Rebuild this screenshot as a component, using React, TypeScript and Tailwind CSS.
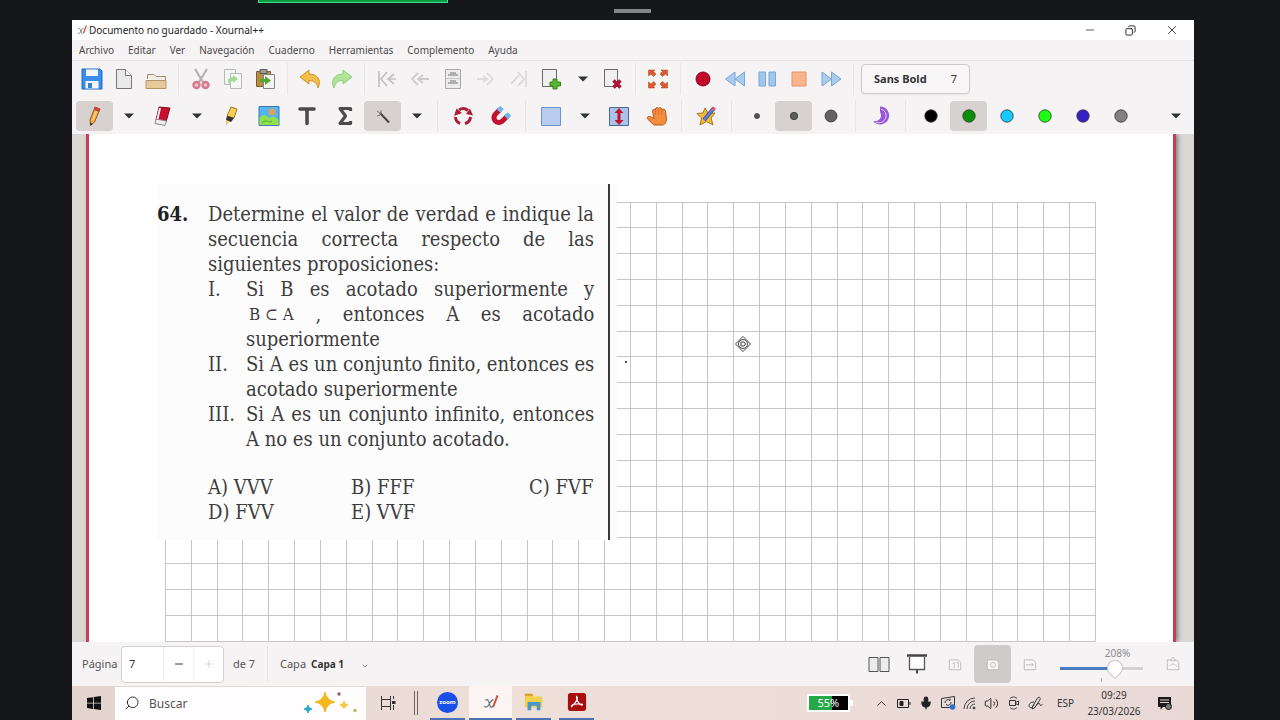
import type { ReactNode } from "react";
import { ChevronUp, ChevronDown, Copy, Minus, Mic, Plus, Search, Volume2, X } from "lucide-react";

const STEP = 25.83;

const menus = [
  "Archivo",
  "Editar",
  "Ver",
  "Navegación",
  "Cuaderno",
  "Herramientas",
  "Complemento",
  "Ayuda",
];

const colors = [
  { name: "Negro", fill: "#000000" },
  { name: "Verde", fill: "#0a8f0a", active: true },
  { name: "Celeste", fill: "#18c8fa" },
  { name: "Lima", fill: "#1cff14" },
  { name: "Azul", fill: "#3622c4" },
  { name: "Gris", fill: "#808080" },
];

const options = ["A) VVV", "B) FFF", "C) FVF", "D) FVV", "E) VVF"];

const Icon = ({ children, size = 22 }: { children: ReactNode; size?: number }) => (
  <svg width={size} height={size} viewBox="0 0 22 22" fill="none" className="shrink-0">
    {children}
  </svg>
);

const Tool = ({ label, children }: { label: string; children: ReactNode }) => (
  <button aria-label={label} className="flex h-[30px] w-8 items-center justify-center rounded">
    {children}
  </button>
);

const Mode = ({ label, active, children }: { label: string; active?: boolean; children: ReactNode }) => (
  <button
    aria-label={label}
    className={`flex h-[30px] w-[37px] shrink-0 items-center justify-center rounded ${active ? "bg-[#d7d2d0]" : ""}`}
  >
    {children}
  </button>
);

const Caret = ({ label }: { label: string }) => (
  <button aria-label={label} className="flex h-[30px] w-[29px] shrink-0 items-center justify-center">
    <svg width="10" height="6" viewBox="0 0 10 6">
      <path d="M0 0.5H10L5 5.5Z" fill="#2e3436" />
    </svg>
  </button>
);

const Sep = () => (
  <div className="flex h-8 w-[13px] shrink-0 justify-center">
    <div className="w-px bg-[#e9e5e5]" />
  </div>
);

const SepSmall = () => (
  <div className="flex h-8 w-[11px] shrink-0 justify-center">
    <div className="w-px bg-[#e9e5e5]" />
  </div>
);

const Dot = ({ r, fill }: { r: number; fill: string }) => (
  <Icon>
    <circle cx="11" cy="11" r={r} fill={fill} stroke="#333" strokeWidth="0.8" />
  </Icon>
);

const XLogo = ({ size }: { size: number }) => (
  <Icon size={size}>
    <path d="M4 9c3-2 4 0 5 4s2 6 4 3M14 8c-3 0-4 4-6 7s-4 3-5 1" stroke="#667078" strokeWidth="1.5" />
    <path d="M19 3l-5 13" stroke="#d0503c" strokeWidth="2.4" />
    <path d="M14.6 14.5l-1 3" stroke="#8a6a50" strokeWidth="1.4" />
  </Icon>
);

const TitleBar = () => (
  <div className="flex h-5 items-center bg-white pl-1">
    <XLogo size={12} />
    <h1 className="ml-px flex-1 text-[10px] text-[#222]">Documento no guardado - Xournal++</h1>
    <div className="flex items-center text-[#222]">
      <button aria-label="Minimizar" className="flex w-10 justify-center">
        <Minus size={12} strokeWidth={1.5} />
      </button>
      <button aria-label="Restaurar" className="flex w-10 justify-center">
        <Copy size={11} strokeWidth={2} className="-scale-x-100" />
      </button>
      <button aria-label="Cerrar" className="flex w-11 justify-center">
        <X size={14} strokeWidth={1.5} />
      </button>
    </div>
  </div>
);

const MenuBar = () => (
  <nav className="flex h-[21px] items-center gap-[14px] border-b border-[#e6e2e2] pl-[7px]">
    {menus.map((menu) => (
      <button key={menu} className="text-[10px] text-[#4a4a4a]">
        {menu}
      </button>
    ))}
  </nav>
);

const MainTools = () => (
  <div className="flex h-9 items-center pl-1">
    <Tool label="Guardar">
      <Icon>
        <path d="M1 1H19L21 3V21H1Z" fill="#3b8eea" stroke="#2268c0" />
        <path d="M5 1.5H17V8H5Z" fill="#f4f8fc" />
        <path d="M4.5 13H17.5V20.5H4.5Z" fill="#f4f8fc" />
        <path d="M7 15H11V20H7Z" fill="#3b7fc8" />
      </Icon>
    </Tool>
    <Tool label="Nuevo">
      <Icon>
        <path d="M3.5 1.5H12.5L18.5 7.5V20.5H3.5Z" fill="#e9e9e9" stroke="#777" />
        <path d="M12.5 1.5V7.5H18.5" fill="#fff" stroke="#777" />
      </Icon>
    </Tool>
    <Tool label="Abrir">
      <Icon>
        <path d="M2.5 11V6.5H9L11 8.5H20.5V12" fill="#f1eee8" stroke="#a08d70" />
        <path d="M1 12.5H21V20.5H1Z" fill="#e7c99a" stroke="#b2956b" />
      </Icon>
    </Tool>
    <Sep />
    <Tool label="Cortar">
      <Icon>
        <path d="M5 1L13 14M17 1L9 14" stroke="#b3b3b3" strokeWidth="2.2" />
        <circle cx="6.5" cy="17" r="3" fill="#f0c4cc" stroke="#d47a8c" strokeWidth="2.4" />
        <circle cx="15.5" cy="17" r="3" fill="#f0c4cc" stroke="#d47a8c" strokeWidth="2.4" />
      </Icon>
    </Tool>
    <Tool label="Copiar">
      <Icon>
        <path d="M2.5 1.5H13.5V16.5H2.5Z" fill="#f2f4f1" stroke="#b7bab5" />
        <path d="M8.5 5.5H19.500V20.500H8.500Z" fill="#f4f7f3" stroke="#b7bab5" />
        <path d="M6 10C6 7 9 6 11 6V4L16 8L11 12V10C9 10 8 11 9 13C7 13 6 12 6 10Z" fill="#a4d895" transform="translate(0 3)" />
      </Icon>
    </Tool>
    <Tool label="Pegar">
      <Icon>
        <path d="M2.5 3.5H16.5V18.5H2.5Z" fill="#b98b45" stroke="#7d5c28" />
        <path d="M6 1.5H13V5.5H6Z" fill="#999" stroke="#5c5c5c" />
        <path d="M9.5 6.5H20.5V20.5H9.5Z" fill="#f4f6f3" stroke="#85877f" />
        <path d="M6 11H11V8L17 12.5L11 17V14H6Z" fill="#4ea832" />
      </Icon>
    </Tool>
    <Sep />
    <Tool label="Deshacer">
      <Icon>
        <path d="M1 9L10 2V6C18 6 23 12 19 20C18 15 15 12.5 10 12.5V16Z" fill="#f7bd4b" stroke="#cf922c" />
      </Icon>
    </Tool>
    <Tool label="Rehacer">
      <Icon>
        <path d="M21 9L12 2V6C4 6 -1 12 3 20C4 15 7 12.5 12 12.5V16Z" fill="#afe39a" stroke="#92cf7c" />
      </Icon>
    </Tool>
    <Sep />
    <div className="flex gap-px">
      <Tool label="Primera página">
        <Icon>
          <path d="M3 3V19M11 4L5 11L11 18M18 6L12 11L18 16M12 11H20" stroke="#c3c1c1" strokeWidth="1.7" />
        </Icon>
      </Tool>
      <Tool label="Página anterior">
        <Icon>
          <path d="M9 5L3 11L9 17M14 7L9 11L14 15M9 11H20" stroke="#cdcbcb" strokeWidth="1.8" />
        </Icon>
      </Tool>
      <Tool label="Ir a página">
        <Icon>
          <path d="M3.5 1.5H18.5V20.5H3.5Z" fill="#ececec" stroke="#a9a9a9" />
          <path d="M6 7H16M6 15H16M8 5H14M8 13H14" stroke="#9b9b9b" strokeWidth="1.6" />
          <path d="M4 10.5H18" stroke="#c5c5c5" />
        </Icon>
      </Tool>
      <Tool label="Página siguiente">
        <Icon>
          <path d="M12 5L18 11L12 17M2 11H12M8 8L12 11L8 14" stroke="#dddbdb" strokeWidth="1.8" />
        </Icon>
      </Tool>
      <Tool label="Última página">
        <Icon>
          <path d="M18 3V19M10 4L16 11L10 18M3 16L11 7" stroke="#d9d7d7" strokeWidth="1.7" />
        </Icon>
      </Tool>
      <Tool label="Añadir página">
        <Icon>
          <path d="M1.5 1.5H15.5V18.5H1.5Z" fill="#f0f0f0" stroke="#6b6b6b" />
          <path d="M12 11H16V14H19.5V18H16V21H12V18H9V14H12Z" fill="#58b830" stroke="#34801a" />
        </Icon>
      </Tool>
    </div>
    <Caret label="Tipo de página" />
    <Tool label="Eliminar página">
      <Icon>
        <path d="M2.5 1.5H15.5V18.5H2.5Z" fill="#f0f0f0" stroke="#6b6b6b" />
        <path d="M11.5 12.5L18.5 19.5M18.5 12.5L11.5 19.5" stroke="#a81834" strokeWidth="3.6" />
      </Icon>
    </Tool>
    <Sep />
    <Tool label="Pantalla completa">
      <Icon>
        <path d="M1.500 2H8L6.500 3.500L9 6L6.500 8.500L4 6L1.500 8ZM20.500 2V8L18.500 6L15.500 8.500L13 6L15.500 3.500L14 2ZM1.500 20V14L4 16L6.500 13.500L9 16L6.500 18.500L8 20ZM20.500 20H14L15.500 18.500L13 16L15.500 13.500L18.500 16L20.500 14Z" fill="#dd5a2c" stroke="#b43c18" strokeWidth="0.5" />
      </Icon>
    </Tool>
    <Sep />
    <Tool label="Grabar">
      <Icon>
        <circle cx="11" cy="11" r="7" fill="#c4072b" stroke="#8c0820" />
      </Icon>
    </Tool>
    <Tool label="Retroceder">
      <Icon>
        <path d="M11 4V18L1.5 11ZM20.5 4V18L11 11Z" fill="#a9cbee" stroke="#7aa6d6" />
      </Icon>
    </Tool>
    <Tool label="Pausa">
      <Icon>
        <path d="M3 4H9.5V18H3ZM13 4H19.5V18H13Z" fill="#a2c6ec" stroke="#7aa6d6" />
      </Icon>
    </Tool>
    <Tool label="Detener">
      <Icon>
        <path d="M4 4H18V18H4Z" fill="#fbb48c" stroke="#e0976c" />
      </Icon>
    </Tool>
    <Tool label="Avanzar">
      <Icon>
        <path d="M2 4V18L11.5 11ZM11.5 4V18L21 11Z" fill="#a9cbee" stroke="#7aa6d6" />
      </Icon>
    </Tool>
    <Sep />
    <button className="ml-px flex h-[30px] w-[109px] shrink-0 items-center justify-between rounded border border-[#cfcaca] bg-[#f8f6f6] px-3 text-[11px] text-[#333] shadow-xs">
      <span className="font-bold">Sans Bold</span>
      <span>7</span>
    </button>
  </div>
);

const DrawTools = () => (
  <div className="flex h-[37px] items-center gap-px pl-1">
    <Mode label="Lápiz" active>
      <Icon>
        <path d="M11 2L16 4L10.500 17L6.500 20.500L6 15Z" fill="#f3ae46" stroke="#8c5a1a" />
        <path d="M11 2L16 4L15 7L10 5Z" fill="#cf3d3d" />
        <path d="M12.500 6L9 15" stroke="#fbd98a" strokeWidth="1.200" />
        <path d="M6.300 17.500L6.500 20.500L8.500 19Z" fill="#222" />
      </Icon>
    </Mode>
    <Caret label="Opciones de lápiz" />
    <Mode label="Borrador">
      <Icon>
        <path d="M7 2L18 3L14 17L4 15Z" fill="#c8102e" stroke="#7c1422" />
        <path d="M4 14L14.500 16L13 20.5L3 18.5Z" fill="#eee" stroke="#8b8b8b" />
        <path d="M8 3L5.5 14" stroke="#eee" strokeWidth="2" />
      </Icon>
    </Mode>
    <Caret label="Opciones de borrador" />
    <Mode label="Resaltador">
      <Icon>
        <path d="M11 2L17 4L14 13L7 11Z" fill="#f6d04e" stroke="#9b7b26" />
        <path d="M7 11L14 13L11 17L6 15Z" fill="#333" />
        <path d="M6 15L9 17L6 20.5Z" fill="#e9c94a" />
      </Icon>
    </Mode>
    <Mode label="Imagen">
      <Icon>
        <path d="M1 1.5H21V20.5H1Z" fill="#55b4f2" stroke="#4177b0" />
        <circle cx="14" cy="7" r="3.5" fill="#d9a35c" />
        <path d="M1.5 13C5 8 8 10 11 13C14 11 17 11 20.5 15V20H1.5Z" fill="#8ee04c" />
        <path d="M4 18C8 14 11 18 14 16" stroke="#4eaa3a" />
      </Icon>
    </Mode>
    <Mode label="Texto">
      <Icon>
        <path d="M4 4H18M11 4V18.500" stroke="#4b4b4b" strokeWidth="3.600" strokeLinecap="round" />
      </Icon>
    </Mode>
    <Mode label="Fórmula">
      <Icon>
        <path d="M16.500 6V3.5H6L11.500 11L6 18.500H16.500V16" stroke="#4b4b4b" strokeWidth="3.2" strokeLinejoin="round" />
      </Icon>
    </Mode>
    <Mode label="Formas" active>
      <Icon>
        <path d="M8 8L17 17.500" stroke="#444" strokeWidth="2" />
        <path d="M5 6L9 9M9 5V8M5 11L8 10" stroke="#777" />
      </Icon>
    </Mode>
    <Caret label="Opciones de formas" />
    <SepSmall />
    <Mode label="Rotación">
      <Icon>
        <path d="M3.5 12A7.5 7.5 0 0 0 8 18.5M13 18.6A7.5 7.5 0 0 0 18.5 12M16 5.5A7.5 7.5 0 0 0 7 5" stroke="#ab1e36" strokeWidth="3" />
        <path d="M2 11L4.5 3.5L10 8ZM14 9L21 10.5L18 3.5Z" fill="#ab1e36" />
      </Icon>
    </Mode>
    <Mode label="Ajuste a cuadrícula">
      <Icon>
        <path d="M10 4.5L5.5 9C1 14 7 20.5 12.5 16L17.5 11" stroke="#c2122f" strokeWidth="5" />
        <path d="M8.5 6L12 2.5M16 12.5L19.5 9" stroke="#71b5ea" strokeWidth="5" />
      </Icon>
    </Mode>
    <SepSmall />
    <Mode label="Seleccionar">
      <Icon>
        <path d="M1.5 2.5H20.5V20.5H1.5Z" fill="#b8cdee" stroke="#6d93cb" />
      </Icon>
    </Mode>
    <Caret label="Opciones de selección" />
    <Mode label="Espacio vertical">
      <Icon>
        <path d="M1.5 2.5H20.5V20.5H1.5Z" fill="#a9c3ea" stroke="#4f678e" />
        <path d="M11 3L15.500 8H12.500V15H15.500L11 20L6.500 15H9.500V8H6.500Z" fill="#c0142f" />
      </Icon>
    </Mode>
    <Mode label="Mano">
      <Icon>
        <path d="M8 20L1.500 14C0.500 12 2.500 10.500 5 12L8 13.500L6.500 6C6.500 4 8.500 3.500 9.500 5.500L9.500 4C10 2 12 2 12.500 3.500C13.500 2 15.500 2.500 15.500 4.500C17.500 3.500 19.500 4.500 19.500 6.500L20.500 14C20.500 17 18.500 20 16.500 20Z" fill="#f58b3c" stroke="#b85a1c" />
        <path d="M9.5 5V10M12.7 4V10M15.8 5V10" stroke="#d97838" />
      </Icon>
    </Mode>
    <SepSmall />
    <Mode label="Barra flotante">
      <Icon>
        <path d="M9 3L12 8L19 8L15 13L17 20L10.5 16.5L4 20L5.5 13L1 8.5L7 8Z" fill="#f5b93c" stroke="#a6741c" />
        <path d="M18 3L8 15" stroke="#44548c" strokeWidth="4" />
        <path d="M18 3L8 15" stroke="#5f86d8" strokeWidth="2" />
        <path d="M18.5 2.5L16.5 5" stroke="#e05078" strokeWidth="3.5" />
      </Icon>
    </Mode>
    <SepSmall />
    <div className="flex">
      <Mode label="Fino">
        <Dot r={2.5} fill="#555" />
      </Mode>
      <Mode label="Medio" active>
        <Dot r={3.7} fill="#5c5c5c" />
      </Mode>
      <Mode label="Grueso">
        <Dot r={6} fill="#626262" />
      </Mode>
    </div>
    <SepSmall />
    <Mode label="Relleno">
      <Icon>
        <path d="M10 1.500A9 9 0 1 1 3 16C9 17 13 12 10 7Z" fill="#9a56dc" />
        <path d="M11 4A7 7 0 1 1 6 17" stroke="#e2cff5" />
      </Icon>
    </Mode>
    <SepSmall />
    {colors.map((color) => (
      <Mode key={color.name} label={color.name} active={color.active}>
        <Dot r={6.2} fill={color.fill} />
      </Mode>
    ))}
    <div className="flex flex-1 justify-end pr-1">
      <Caret label="Más herramientas" />
    </div>
  </div>
);

const Line = ({ children, full }: { children: ReactNode; full?: boolean }) => (
  <p className={`whitespace-nowrap ${full ? "[text-align-last:justify]" : ""}`}>{children}</p>
);

const Exercise = () => (
  <section className="relative w-[460px] bg-[#fdfcfd] font-['DejaVu_Serif_Condensed','DejaVu_Serif',serif] text-[20px] leading-[25px] text-[#3c3c3c]">
    <div className="flex w-[453px] border-r-2 border-[#3a3a3a] pt-[18px] pb-[15px]">
      <div className="w-[51px] shrink-0 font-bold text-[#222]">64.</div>
      <div className="w-[386px]">
        <Line full>Determine el valor de verdad e indique la</Line>
        <Line full>secuencia correcta respecto de las</Line>
        <Line>siguientes proposiciones:</Line>
        <div className="grid grid-cols-[38px_1fr]">
          <div>I.</div>
          <div>
            <Line full>Si B es acotado superiormente y</Line>
            <div className="flex justify-between pl-[3px] whitespace-nowrap">
              <span className="text-[17px]">B ⊂ A</span>
              <span>,</span>
              <span>entonces</span>
              <span>A</span>
              <span>es</span>
              <span>acotado</span>
            </div>
            <Line>superiormente</Line>
          </div>
          <div>II.</div>
          <div>
            <Line full>Si A es un conjunto finito, entonces es</Line>
            <Line>acotado superiormente</Line>
          </div>
          <div>III.</div>
          <div>
            <Line full>Si A es un conjunto infinito, entonces</Line>
            <Line>A no es un conjunto acotado.</Line>
          </div>
        </div>
        <div className="mt-[23px] grid grid-cols-[143px_178px_auto] whitespace-nowrap">
          {options.map((option) => (
            <span key={option}>{option}</span>
          ))}
        </div>
      </div>
    </div>
  </section>
);

const Grid = () => (
  <svg className="absolute top-[68px] left-[76px] h-full w-[932px]">
    {Array.from({ length: 37 }, (_, i) => (
      <line key={`v${i}`} x1={Math.round(i * STEP) + 0.5} x2={Math.round(i * STEP) + 0.5} y1="0" y2="100%" stroke="#c6c6c6" />
    ))}
    {Array.from({ length: 30 }, (_, i) => (
      <line key={`h${i}`} y1={Math.floor(i * STEP) + 0.5} y2={Math.floor(i * STEP) + 0.5} x1="0" x2="931" stroke="#c6c6c6" />
    ))}
  </svg>
);

const Canvas = () => (
  <main className="flex min-h-0 flex-1 overflow-hidden bg-[#d9d6d3] pr-[18px] pl-[14px]">
    <div className="relative flex-1 overflow-hidden border-x-3 border-[#c4405a] bg-white pt-[50px] pl-[68px] shadow-[2px_0_4px_#8a8080]">
      <Grid />
      <Exercise />
      <div className="absolute top-[227px] left-[536px] size-[2px] bg-[#555]" />
      <svg className="absolute top-[202px] left-[646px]" width="16" height="16" viewBox="0 0 16 16" fill="none" stroke="#444">
        <path d="M8 0.5L15.5 8L8 15.5L0.5 8Z" />
        <circle cx="8" cy="8" r="4.5" />
        <path d="M6 6H9L10.5 8L9 10H6Z" />
      </svg>
    </div>
  </main>
);

const PageIcon = ({ children }: { children?: ReactNode }) => (
  <Icon size={18}>
    <path d="M4 6H15L18 9V18H4Z" fill="#f6f6f6" stroke="#b5b2b2" />
    {children}
  </Icon>
);

const StatusBar = () => (
  <footer className="flex h-11 shrink-0 items-center bg-[#f6f3f4] pl-[10px] text-[11px] text-[#555]">
    <label htmlFor="page" className="w-[39px]">
      Página
    </label>
    <div className="flex h-[37px] w-[103px] items-stretch rounded border border-[#d5d0d0] bg-white">
      <input id="page" defaultValue="7" className="w-[41px] min-w-0 bg-transparent pl-[7px] text-[#333]" />
      <button aria-label="Restar" className="flex w-[30px] items-center justify-center border-l border-[#f0eded] text-[#333]">
        <Minus size={12} />
      </button>
      <button aria-label="Sumar" className="flex w-[30px] items-center justify-center border-l border-[#f0eded] text-[#d5d5d5]">
        <Plus size={12} />
      </button>
    </div>
    <span className="ml-[9px] w-[34px]">de 7</span>
    <div className="h-9 w-px bg-[#e9e5e5]" />
    <label htmlFor="layer" className="ml-3 w-[31px]">
      Capa
    </label>
    <select id="layer" className="w-[50px] appearance-none bg-transparent text-[10px] font-bold text-[#333]">
      <option>Capa 1</option>
    </select>
    <ChevronDown size={8} className="mt-1" />
    <div className="flex flex-1 items-center justify-end pr-[10px]">
      <button aria-label="Páginas pareadas" className="flex w-[38px] justify-center">
        <Icon>
          <path d="M1 4.5H10V18.5H1ZM12 4.5H21V18.5H12Z" fill="#ececec" stroke="#555" />
        </Icon>
      </button>
      <button aria-label="Presentación" className="flex w-[38px] justify-center">
        <Icon>
          <path d="M3.5 4V16.5H18.5V4" fill="#fff" stroke="#555" strokeWidth="1.3" />
          <path d="M1 2.5H21" stroke="#444" strokeWidth="2.5" />
          <path d="M11 17V20.5" stroke="#444" strokeWidth="2" />
        </Icon>
      </button>
      <button aria-label="Tamaño original" className="flex w-[38px] justify-center">
        <PageIcon>
          <path d="M8 11L10 9V16M13 9H15V15" stroke="#b5b2b2" />
        </PageIcon>
      </button>
      <button aria-label="Ajustar" className="flex h-[38px] w-[37px] items-center justify-center rounded bg-[#cfcbca]">
        <PageIcon>
          <circle cx="11" cy="12" r="3" stroke="#b5b2b2" />
        </PageIcon>
      </button>
      <button aria-label="Ajustar ancho" className="flex w-[38px] justify-center">
        <PageIcon>
          <path d="M6 12H15M13 10L15 12L13 14" stroke="#b5b2b2" />
        </PageIcon>
      </button>
      <div className="ml-[11px] flex w-[83px] flex-col items-center">
        <label htmlFor="zoom" className="ml-8 text-[10px] leading-3 text-[#8a8a8a]">
          208%
        </label>
        <input
          id="zoom"
          type="range"
          defaultValue="70"
          className="my-2 h-[3px] w-full appearance-none bg-[linear-gradient(to_right,#4a7ac0_68%,#d5d1d1_68%)] [&::-webkit-slider-thumb]:size-4 [&::-webkit-slider-thumb]:-rotate-45 [&::-webkit-slider-thumb]:appearance-none [&::-webkit-slider-thumb]:rounded-full [&::-webkit-slider-thumb]:rounded-bl-none [&::-webkit-slider-thumb]:border [&::-webkit-slider-thumb]:border-[#c9c5c5] [&::-webkit-slider-thumb]:bg-white"
        />
        <div className="h-1 w-px bg-[#aaa]" />
      </div>
      <button aria-label="Acercar" className="ml-[18px] flex w-[23px] justify-center">
        <PageIcon>
          <path d="M11 3L14 7H8ZM7 14C8 10 14 10 15 14" fill="#fff" stroke="#b5b2b2" />
        </PageIcon>
      </button>
    </div>
  </footer>
);

const Running = ({ label, active, children }: { label: string; active?: boolean; children: ReactNode }) => (
  <button
    aria-label={label}
    className={`flex h-full items-center justify-center border-b-2 border-[#4c72b4] ${active ? "w-[43px] bg-[#fcf4f2]" : "mx-1 w-[35px]"}`}
  >
    {children}
  </button>
);

const Tray = ({ label, children }: { label: string; children: ReactNode }) => (
  <button aria-label={label} className="flex w-[22px] justify-center">
    {children}
  </button>
);

const Taskbar = () => (
  <div className="flex h-[34px] shrink-0 items-center bg-[linear-gradient(to_right,#e3d3ce,#eedfd9_40%,#e9d9d6)] text-[#222]">
    <button aria-label="Inicio" className="flex w-[43px] justify-center">
      <svg width="14" height="14" viewBox="0 0 14 14" fill="#111">
        <path d="M0 2L6 1.2V6.7H0ZM6.800 1L14 0V6.700H6.800ZM0 7.400H6V12.900L0 12.100ZM6.800 7.400H14V14L6.800 13Z" />
      </svg>
    </button>
    <div className="flex h-[33px] w-[251px] items-center bg-[#fffdfd] pr-2 pl-[9px]">
      <Search size={16} strokeWidth={1.4} className="-scale-x-100" />
      <input aria-label="Buscar" placeholder="Buscar" className="ml-[9px] min-w-0 flex-1 bg-transparent pt-[2px] text-[12px] placeholder:text-[#555]" />
      <svg width="54" height="24" viewBox="0 0 54 24">
        <path d="M21 1Q22.5 9.5 31 11Q22.5 12.5 21 21Q19.5 12.5 11 11Q19.5 9.5 21 1Z" fill="#f2b81c" stroke="#f2b81c" />
        <path d="M40 9Q41 13 45 14Q41 15 40 19Q39 15 35 14Q39 13 40 9Z" fill="#f7c93c" />
        <path d="M4 14Q4.5 17.5 8 18Q4.5 18.5 4 22Q3.5 18.5 0 18Q3.5 17.5 4 14Z" fill="#24a6c8" stroke="#24a6c8" />
        <circle cx="35" cy="3" r="1.7" fill="#8a6550" />
        <circle cx="51" cy="19.5" r="1.7" fill="#c3b565" />
      </svg>
    </div>
    <button aria-label="Vista de tareas" className="flex w-[44px] justify-center">
      <svg width="16" height="16" viewBox="0 0 16 16" fill="none" stroke="#333">
        <path d="M1.5 1V4.5H10.5V1M1.5 15V11.5H10.5V15M1.5 4.5V11.5M10.5 4.5V11.5M13.5 1V4M13.5 10V15" />
        <path d="M12 7.5H15.5" strokeWidth="3" />
      </svg>
    </button>
    <div className="ml-1 h-6 w-1 border-x border-[#666]" />
    <div className="ml-2 flex h-full">
      <Running label="Zoom">
        <span className="flex size-[21px] items-center justify-center rounded-full bg-[#1a50ea] text-[6px] font-bold text-white">zoom</span>
      </Running>
      <Running label="Xournal++" active>
        <XLogo size={18} />
      </Running>
      <Running label="Explorador">
        <Icon size={20}>
          <path d="M1 2H9L11 5H20V17H1Z" fill="#f3cf4e" />
          <path d="M1 2H9L10 4H1Z" fill="#d39a2c" />
          <path d="M4 20V11H18V20H14V15H8V20Z" fill="#4897cc" />
        </Icon>
      </Running>
      <Running label="Acrobat">
        <Icon size={20}>
          <rect x="1" y="1" width="20" height="20" rx="3" fill="#a80d10" />
          <path d="M10.500 5C13 6 10 12 5 16C4 14 11 12 17 13.500C17 16 11 13 10.500 5Z" stroke="#fff" strokeWidth="1.4" />
        </Icon>
      </Running>
    </div>
    <div className="flex flex-1 items-center justify-end">
      <div className="mr-[18px] flex items-center">
        <div className="flex h-[18px] w-[43px] items-center justify-center border-2 border-white bg-[linear-gradient(to_right,#25a847_58%,#000_58%)] text-[11px] leading-3 text-white">
          55%
        </div>
        <div className="h-[6px] w-[3px] bg-white" />
      </div>
      <Tray label="Mostrar iconos ocultos">
        <ChevronUp size={15} strokeWidth={1.4} />
      </Tray>
      <Tray label="Batería">
        <svg width="14" height="9" viewBox="0 0 14 9" fill="none" stroke="#222">
          <path d="M0.5 0.5H11.5V8.5H0.5ZM13 3V6" />
          <path d="M3 2.5H6V6.5H3Z" fill="#222" />
        </svg>
      </Tray>
      <Tray label="Micrófono">
        <Mic size={14} fill="#222" />
      </Tray>
      <Tray label="Sincronización">
        <svg width="16" height="16" viewBox="0 0 16 16" fill="none" stroke="#333">
          <path d="M1.5 3.5L14.5 1.5V11M1.5 3.5V12.5H10M5 8A3 3 0 0 1 10 5.5V3.5M11 7A3 3 0 0 1 6 9.5" />
          <circle cx="12.5" cy="12" r="2.8" fill="#2f6fd0" stroke="none" />
        </svg>
      </Tray>
      <Tray label="Red">
        <svg width="13" height="13" viewBox="0 0 13 13" fill="none" stroke="#444">
          <path d="M1 12A11 11 0 0 1 12 1M4 12A8 8 0 0 1 12 4M7 12A5 5 0 0 1 12 7" />
          <circle cx="11" cy="11" r="1" fill="#333" />
        </svg>
      </Tray>
      <Tray label="Volumen">
        <Volume2 size={15} strokeWidth={1.5} />
      </Tray>
      <Tray label="Cámara">
        <svg width="12" height="14" viewBox="0 0 12 14" fill="none" stroke="#333">
          <path d="M1.5 4.5H7.5V9.5H1.5ZM7.5 6.5L10.5 5V9L7.5 7.5M2 2.5C4 0.5 7 0.5 9 2.5M2 11.5C4 13.5 7 13.5 9 11.5" />
        </svg>
      </Tray>
      <Tray label="Lápiz digital">
        <svg width="15" height="15" viewBox="0 0 15 15" fill="none" stroke="#333">
          <path d="M4.500 10.500L9.500 2C10.500 0.500 13 1.500 12 3.500L7 11.500L4 13Z" />
          <path d="M6 6C2 6 0 9 1.500 11S5 10 6.500 9M8.500 9C10 7 12 7 12 8.500S13 9.500 14.500 8.500" />
        </svg>
      </Tray>
      <button className="ml-[10px] text-[10px] text-[#333]">ESP</button>
      <button className="ml-3 w-[56px] text-center text-[10px] leading-4 text-[#333]">
        09:29
        <br />
        23/03/2026
      </button>
      <button aria-label="Notificaciones" className="mr-[22px] ml-[15px]">
        <svg width="15" height="15" viewBox="0 0 15 15" fill="none">
          <path d="M1 1H14V11H6L3.5 13.5V11H1Z" fill="#1a1a1a" />
          <path d="M3 4H12M3 6.5H12" stroke="#e9d9d6" />
          <circle cx="11.5" cy="10.5" r="3" fill="#777" stroke="#1a1a1a" />
        </svg>
      </button>
    </div>
  </div>
);

const App = () => (
  <div className="flex h-screen flex-col bg-[#15171a] font-['Noto_Sans','Open_Sans',sans-serif]">
    <div className="flex h-5 shrink-0 pl-[258px]">
      <div className="h-[3px] w-[190px] border-x border-b border-[#3fe08a] bg-[#0c9a45]" />
      <div className="mt-[9px] ml-[166px] h-1 w-[37px] bg-[#858688]" />
    </div>
    <div className="mr-[86px] ml-[72px] flex min-h-0 flex-1 flex-col bg-white">
      <TitleBar />
      <header className="shrink-0 bg-[#f6f3f4]">
        <MenuBar />
        <MainTools />
        <DrawTools />
      </header>
      <Canvas />
      <StatusBar />
      <Taskbar />
    </div>
  </div>
);

export default App;
